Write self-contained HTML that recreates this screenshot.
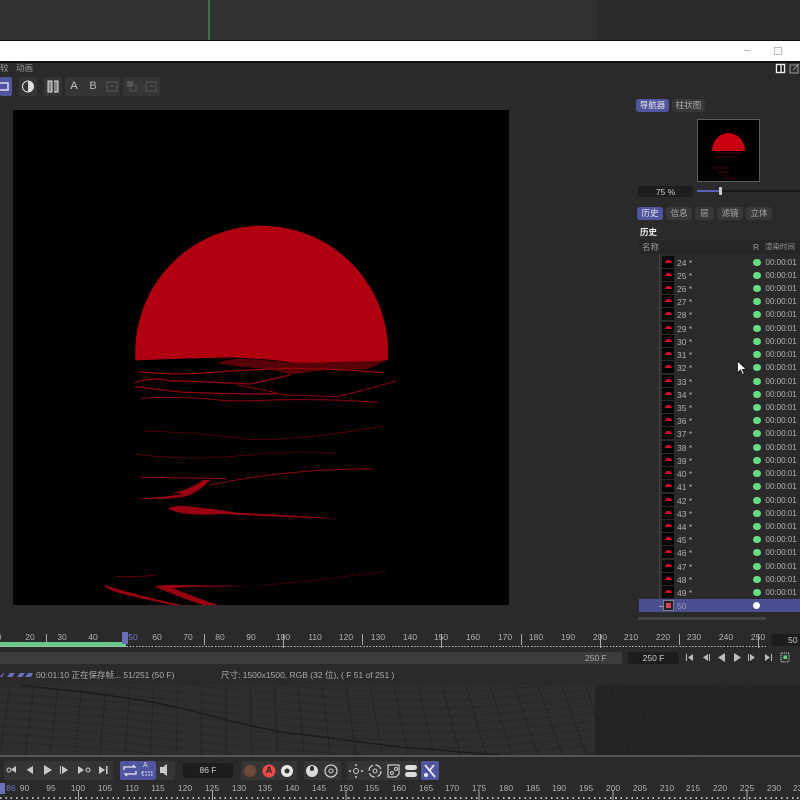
<!DOCTYPE html>
<html><head><meta charset="utf-8"><style>
html,body{margin:0;padding:0;background:#282828}
#p{position:relative;width:800px;height:800px;overflow:hidden;background:#2a2a2a;font:8.5px/12px "Liberation Sans","Noto Sans CJK SC",sans-serif;color:#b5b5b5;filter:blur(.3px)}
#p div,#p span,#p svg{position:absolute}
.b{background:#353535;border-radius:2px}
.tab{top:99px;height:13px;line-height:13px;text-align:center;background:#383838;border-radius:3px;color:#aaa}
.on{background:#50559f;color:#e8e8e8}
.t2{top:207px}
.l{top:631px;width:24px;margin-left:-12px;text-align:center;color:#b0b0b0}
.m{top:782px;width:24px;margin-left:-12px;text-align:center;color:#b0b0b0}
.r{left:639px;width:161px;height:13px}
.r i{position:absolute;left:23px;top:0;width:12px;height:12px;background:#060606}
.r i:after{content:"";position:absolute;left:2.5px;top:3.5px;width:7px;height:3.5px;border-radius:4px 4px 0 0;background:#d40a28}
.r b{position:absolute;left:38px;top:1px;font-weight:normal;color:#b0b0b0}
.r u{position:absolute;left:114px;top:2.5px;width:7.5px;height:7.5px;border-radius:50%;background:#68dc84}
.r s{position:absolute;left:126.5px;top:1px;text-decoration:none;color:#b0b0b0;font-size:8px}
</style></head><body><div id="p">
<div style="left:0;top:0;width:597px;height:40px;background:#323232"></div>
<div style="left:597px;top:0;width:203px;height:40px;background:#2a2a2a"></div>
<div style="left:208px;top:0;width:2px;height:40px;background:#3c6e48"></div>
<div style="left:0;top:40px;width:800px;height:1.5px;background:#111"></div>
<div style="left:0;top:41px;width:800px;height:20px;background:#fff"></div>
<div style="left:0;top:61px;width:800px;height:1.5px;background:#111"></div>
<div style="left:744px;top:50px;width:6px;height:1px;background:#bbb"></div>
<div style="left:774px;top:47px;width:6px;height:6px;border:1px solid #bbb"></div>

<span style="left:0;top:62px;color:#999">较</span><span style="left:16px;top:62px;color:#999">动画</span>
<div class="b" style="left:0;top:77px;width:12px;height:19px;background:#50559f"></div>
<div class="b" style="left:19px;top:77px;width:18px;height:19px"></div>
<div class="b" style="left:44px;top:77px;width:18px;height:19px"></div>
<div class="b" style="left:65px;top:77px;width:55px;height:19px"></div>
<div class="b" style="left:123px;top:77px;width:37px;height:19px"></div>
<span style="left:69px;top:80px;width:10px;text-align:center;font-size:11px;color:#c8c8c8">A</span>
<span style="left:88px;top:80px;width:10px;text-align:center;font-size:11px;color:#b8b8b8">B</span>
<svg style="left:0;top:62px" width="800" height="36" viewBox="0 62 800 36" fill="none">
<rect x="-1" y="83" width="9" height="7" stroke="#dde" stroke-width="1.5"/>
<circle cx="28" cy="86.5" r="5.5" stroke="#ddd"/><path d="M28 81a5.5 5.5 0 0 1 0 11z" fill="#ddd"/>
<path d="M48 81h4v11h-4zM54 81h4v11h-4" stroke="#ddd" fill="#ddd" fill-opacity=".5"/>
<path d="M107 82h10v9h-10zM110 86h4" stroke="#555"/>
<path d="M127 81h6v6h-6z" fill="#555"/><path d="M130 85h6v6h-6z" stroke="#555"/><path d="M146 82h10v9h-10zM150 86h4" stroke="#555"/>
<rect x="776.5" y="64.5" width="8" height="8" fill="#111" stroke="#eee" stroke-width="1.4"/><path d="M781 64v8" stroke="#eee" stroke-width="1.4"/>
<path d="M790 65h8v8h-8zM793 70l6-6" stroke="#999"/>
</svg>

<!-- viewer -->
<div style="left:13px;top:110px;width:496px;height:495px;background:#000"></div>
<svg style="left:0;top:0" width="800" height="610" viewBox="0 0 800 610">
<path d="M135.500 360.500A126.500 126.500 0 1 1 388 360Q360 364 297 363Q260 358 233 357.500Q190 358 135.500 360.500z" fill="#b0000f"/>
<g transform="translate(90 340) scale(.3333)" fill="none" stroke="#8e000c" stroke-width="4">
<path d="M380 70Q430 48 520 60Q620 72 720 66Q820 64 890 62L830 88Q720 84 600 104Q560 88 450 80Z" fill="#560007" stroke="none"/>
<path d="M145 95Q250 105 330 100Q450 90 600 85Q720 85 880 98"/>
<path d="M135 128Q180 110 240 122Q350 125 480 132Q540 120 600 105"/>
<path d="M135 140Q200 148 270 156Q400 162 560 162"/>
<path d="M440 135Q500 145 590 165Q680 168 740 170Q830 150 920 122" stroke-width="3"/>
<path d="M150 175Q260 168 370 178Q420 186 550 180Q700 176 865 187" stroke-width="3"/>
<path d="M160 273Q330 278 480 298Q620 303 880 258" stroke="#5e0008" stroke-width="2.500"/>
<path d="M135 343Q300 362 440 348Q600 330 740 340" stroke="#5e0008" stroke-width="2.500"/>
<path d="M150 412Q280 413 410 416" stroke-width="3"/>
<path d="M360 435Q600 385 850 387" stroke-width="3"/>
<path d="M340 420L360 420Q340 445 300 465Q260 480 135 476Q220 472 280 462L245 458Q285 456 340 420Z" fill="#980010" stroke="none"/>
<path d="M235 505Q260 492 320 502Q400 510 440 518Q600 525 750 537Q550 530 400 522Q270 530 235 505Z" fill="#980010" stroke="none"/>
<path d="M75 709Q140 712 200 705" stroke="#5e0008" stroke-width="3"/>
<path d="M195 740Q215 732 300 736L500 738L300 741Q260 742 250 745Q310 770 385 796L340 796Q250 765 195 740Z" fill="#980010" stroke="none"/>
<path d="M500 738Q700 720 890 693" stroke="#4a0006" stroke-width="2"/>
<path d="M38 735Q60 740 110 755Q200 780 280 796L250 796Q150 775 90 760Q55 750 38 735Z" fill="#980010" stroke="none"/>
</g></svg>

<!-- navigator -->
<div class="tab on" style="left:636px;width:33px">导航器</div>
<div class="tab" style="left:672px;width:33px">柱状图</div>
<div style="left:697px;top:119px;width:61px;height:61px;background:#000;border:1.5px solid #5a5a5a"></div>
<svg style="left:697px;top:119px" width="64" height="64" viewBox="697 119 64 64"><path d="M712 151a16.500 18 0 0 1 33 0z" fill="#c8000f"/><path d="M714 153h28M716 157h22M713 168h18M718 172h10M724 178h12" stroke="#3a0006" stroke-width="1.200"/></svg>
<div style="left:638px;top:186px;width:55px;height:11px;line-height:12px;background:#1e1e1e;text-align:center;color:#ccc">75 %</div>
<div style="left:697px;top:190px;width:103px;height:2px;background:#171717"></div>
<div style="left:697px;top:190px;width:23px;height:2px;background:#5a60b5"></div>
<div style="left:718.500px;top:187px;width:3px;height:8px;background:#ccc;border-radius:1px"></div>
<div class="tab on t2" style="left:637px;width:26px">历史</div>
<div class="tab t2" style="left:666px;width:26px">信息</div>
<div class="tab t2" style="left:695px;width:19px">层</div>
<div class="tab t2" style="left:717px;width:26px">滤镜</div>
<div class="tab t2" style="left:746px;width:26px">立体</div>
<span style="left:640px;top:226px;color:#f0f0f0;font-weight:bold">历史</span>
<div style="left:639px;top:240px;width:161px;height:14px;background:#262626"></div>
<span style="left:642px;top:241px;color:#999">名称</span><span style="left:753px;top:241px;color:#999">R</span><span style="left:765px;top:241px;color:#999;font-size:7.500px">渲染时间</span>
<div style="left:659px;top:254px;width:1px;height:353px;background:#444"></div>

<div class="r" style="top:256px"><i></i><b>24 *</b><u></u><s>00:00:01</s></div>
<div class="r" style="top:269px"><i></i><b>25 *</b><u></u><s>00:00:01</s></div>
<div class="r" style="top:282px"><i></i><b>26 *</b><u></u><s>00:00:01</s></div>
<div class="r" style="top:295px"><i></i><b>27 *</b><u></u><s>00:00:01</s></div>
<div class="r" style="top:308px"><i></i><b>28 *</b><u></u><s>00:00:01</s></div>
<div class="r" style="top:322px"><i></i><b>29 *</b><u></u><s>00:00:01</s></div>
<div class="r" style="top:335px"><i></i><b>30 *</b><u></u><s>00:00:01</s></div>
<div class="r" style="top:348px"><i></i><b>31 *</b><u></u><s>00:00:01</s></div>
<div class="r" style="top:361px"><i></i><b>32 *</b><u></u><s>00:00:01</s></div>
<div class="r" style="top:375px"><i></i><b>33 *</b><u></u><s>00:00:01</s></div>
<div class="r" style="top:388px"><i></i><b>34 *</b><u></u><s>00:00:01</s></div>
<div class="r" style="top:401px"><i></i><b>35 *</b><u></u><s>00:00:01</s></div>
<div class="r" style="top:414px"><i></i><b>36 *</b><u></u><s>00:00:01</s></div>
<div class="r" style="top:427px"><i></i><b>37 *</b><u></u><s>00:00:01</s></div>
<div class="r" style="top:441px"><i></i><b>38 *</b><u></u><s>00:00:01</s></div>
<div class="r" style="top:454px"><i></i><b>39 *</b><u></u><s>00:00:01</s></div>
<div class="r" style="top:467px"><i></i><b>40 *</b><u></u><s>00:00:01</s></div>
<div class="r" style="top:480px"><i></i><b>41 *</b><u></u><s>00:00:01</s></div>
<div class="r" style="top:494px"><i></i><b>42 *</b><u></u><s>00:00:01</s></div>
<div class="r" style="top:507px"><i></i><b>43 *</b><u></u><s>00:00:01</s></div>
<div class="r" style="top:520px"><i></i><b>44 *</b><u></u><s>00:00:01</s></div>
<div class="r" style="top:533px"><i></i><b>45 *</b><u></u><s>00:00:01</s></div>
<div class="r" style="top:546px"><i></i><b>46 *</b><u></u><s>00:00:01</s></div>
<div class="r" style="top:560px"><i></i><b>47 *</b><u></u><s>00:00:01</s></div>
<div class="r" style="top:573px"><i></i><b>48 *</b><u></u><s>00:00:01</s></div>
<div class="r" style="top:586px"><i></i><b>49 *</b><u></u><s>00:00:01</s></div>
<div class="r" style="top:599px;height:13px;background:#4a4f90"></div>
<div style="left:659px;top:606px;width:6px;height:1px;background:#999"></div>
<svg style="left:663px;top:600px" width="11" height="11"><rect x=".5" y=".5" width="10" height="10" fill="#222" stroke="#bbb" stroke-dasharray="1 1"/><rect x="3" y="3" width="5" height="5" fill="#e04060"/></svg>
<span style="left:677px;top:600px;color:#9a9ab8">50</span>
<div style="left:753px;top:602px;width:7px;height:7px;border-radius:50%;background:#fff"></div>
<div style="left:638px;top:617px;width:128px;height:3px;background:#444;border-radius:1px"></div>
<svg style="left:736px;top:360px" width="11" height="16" viewBox="0 0 11 16"><path d="M1.500 1v12l3-3 2 4.500 1.800-.8-2-4.300h4z" fill="#fff" stroke="#111" stroke-width=".8"/></svg>

<!-- timeline -->
<div style="left:0;top:642px;width:126px;height:4.500px;background:#67c98a"></div>
<div style="left:0;top:646px;width:766px;height:1px;background:repeating-linear-gradient(90deg,#bbb 0 1.500px,transparent 1.500px 3.160px)"></div>
<svg style="left:0;top:628px" width="800" height="22" viewBox="0 628 800 22" stroke="#aaa" fill="none">
<path d="M46.500 634v11M204.500 634v11M362.500 634v11M521.500 634v11M679.500 634v11"/>
<path d="M283.500 634v14M441.500 634v14M600.500 634v14M758.500 634v14"/>
</svg>
<span class="l" style="left:-1px">0</span><span class="l" style="left:30px">20</span><span class="l" style="left:62px">30</span><span class="l" style="left:93px">40</span><span class="l" style="left:133px;color:#6f74c8">50</span><span class="l" style="left:157px">60</span><span class="l" style="left:188px">70</span><span class="l" style="left:220px">80</span><span class="l" style="left:251px">90</span><span class="l" style="left:283px">100</span><span class="l" style="left:315px">110</span><span class="l" style="left:346px">120</span><span class="l" style="left:378px">130</span><span class="l" style="left:410px">140</span><span class="l" style="left:441px">150</span><span class="l" style="left:473px">160</span><span class="l" style="left:505px">170</span><span class="l" style="left:536px">180</span><span class="l" style="left:568px">190</span><span class="l" style="left:600px">200</span><span class="l" style="left:631px">210</span><span class="l" style="left:663px">220</span><span class="l" style="left:694px">230</span><span class="l" style="left:726px">240</span><span class="l" style="left:758px">250</span>
<div style="left:122px;top:632px;width:6px;height:12px;background:#6a6fb8"></div>
<div style="left:771px;top:634px;width:29px;height:12px;background:#1e1e1e;text-align:right;color:#ccc">50&nbsp;</div>
<div style="left:0;top:652px;width:622px;height:12px;background:#3c3c3c"></div>
<span style="left:585px;top:652px;color:#aaa">250 F</span>
<div style="left:628px;top:652px;width:51px;height:12px;background:#1d1d1d;text-align:center;color:#ccc">250 F</div>
<svg style="left:680px;top:650px" width="120" height="16" viewBox="680 650 120 16" fill="#bbb">
<path d="M686 654v7h1v-7zM693 654v7l-5-3.500zM708 654v7l-5-3.500zM709 654h1v7h-1zM725 653v9l-7-4.500zM734 653v9l7-4.500zM750 654v7l5-3.500zM748 654h1v7h-1zM765 654v7l5-3.500zM771 654h1v7h-1z"/>
<rect x="781" y="653" width="8" height="9" rx="1" fill="#333" stroke="#ccc" stroke-dasharray="1.200 .8"/><rect x="783.500" y="655.500" width="3.500" height="3.500" fill="#5fd07a"/>
</svg>
<svg style="left:0;top:672px" width="34" height="6" viewBox="0 0 34 6" fill="#6a70c0"><path d="M0 5l3-4h1l-2 4zM7 5l3-4h5l-3 4zM17 5l3-4h5l-3 4zM25 5l3-4h5l-2 4z"/></svg>
<span style="left:36px;top:669px;color:#aaa">00:01:10 正在保存帧... 51/251 (50 F)</span>
<span style="left:221px;top:669px;color:#aaa">尺寸: 1500x1500, RGB (32 位), ( F 51 of 251 )</span>

<!-- mesh -->
<svg style="left:0;top:685px" width="800" height="71" viewBox="0 685 800 71" fill="none">
<rect x="0" y="685" width="595" height="71" fill="#2e2e2e"/>
<rect x="595" y="685" width="205" height="71" fill="#242424"/>
<g stroke="#272727" stroke-width=".8">
<path id="h" d="M-5 686C120 690 250 712 400 716C520 720 650 692 805 694"/>
<use href="#h" y="-24"/><use href="#h" y="-16"/><use href="#h" y="-8"/><use href="#h" y="8"/><use href="#h" y="16"/><use href="#h" y="24"/><use href="#h" y="32"/><use href="#h" y="40"/><use href="#h" y="48"/><use href="#h" y="56"/>
<path d="M10 685L0 755M34 685L25 755M58 685L50 755M82 685L75 755M106 685L100 755M130 685L125 755M154 685L150 755M178 685L176 755M202 685L201 755M226 685V755M250 685L252 755M274 685L278 755M298 685L304 755M322 685L330 755M346 685L356 755M370 685L382 755M394 685L408 755M418 685L434 755M442 685L460 755M466 685L486 755M490 685L512 755M514 685L538 755M538 685L562 755M562 685L586 755M586 685L608 755M610 685L630 755M634 685L656 755M658 685L682 755M682 685L708 755M706 685L734 755M730 685L760 755M754 685L786 755M778 685L812 755" stroke="#202020"/>
</g>
<path d="M20 685C60 690 120 695 167 705C210 715 240 725 283 732C330 738 360 742 400 747C440 750 470 753 500 755" stroke="#1b1b1b" stroke-width="1.300"/>
</svg>
<div style="left:0;top:755px;width:800px;height:2px;background:#555"></div>

<!-- bottom toolbar -->
<div class="b" style="left:4px;top:761px;width:109px;height:19px"></div>
<div class="b" style="left:120px;top:761px;width:36px;height:19px;background:#50559f"></div>
<div class="b" style="left:156px;top:761px;width:19px;height:19px"></div>
<div style="left:183px;top:763px;width:50px;height:15px;line-height:15px;background:#1d1d1d;text-align:center;color:#ccc">86 F</div>
<div class="b" style="left:241px;top:761px;width:56px;height:19px"></div>
<div class="b" style="left:304px;top:761px;width:37px;height:19px"></div>
<div class="b" style="left:347px;top:761px;width:72px;height:19px"></div>
<div class="b" style="left:421px;top:761px;width:18px;height:19px;background:#50559f"></div>
<span style="left:143px;top:760px;font-size:7px;color:#ddd">A</span>
<span style="left:265px;top:764px;width:8px;text-align:center;font-weight:bold;color:#222;font-size:9px;z-index:2">A</span>
<svg style="left:0;top:757px" width="800" height="26" viewBox="0 757 800 26" fill="none" stroke="#ccc">
<g fill="#c8c8c8" stroke="none">
<path d="M16 766v7l-5-3.500zM33 766v8l-6-4v-.5zM44 765v10l8-5zM62 766v8l6-4zM60 766h1v8h-1zM78 766v8l6-4zM99 766v8l6-4zM106 766h1.500v8h-1.500z"/>
<path d="M160 767h3l4-3v12l-4-3h-3z"/>
</g>
<circle cx="9" cy="770" r="2"/><circle cx="88" cy="770" r="2"/>
<path d="M124 770v-3h11l-2-2M136 771v3h-11l2 2" stroke="#e8e8f0" stroke-width="1.300"/>
<path d="M142 772h10v3h-10z" stroke="#e0e0f0" stroke-dasharray="2 1"/>
<circle cx="250" cy="771" r="6" fill="#6b4a3a" stroke="#5a4035"/>
<circle cx="269" cy="771" r="6.500" fill="#e84a4a" stroke="none"/>
<circle cx="287" cy="771" r="6" fill="#e8e8e8" stroke="none"/><circle cx="287" cy="771" r="2.500" fill="#333" stroke="none"/>
<circle cx="312" cy="771" r="6" fill="#ddd" stroke="none"/><rect x="310" y="766" width="4" height="5" rx="2" fill="#333" stroke="none"/>
<circle cx="331" cy="771" r="6" stroke-width="1.300"/><circle cx="331" cy="771" r="2" stroke-width="1.100"/>
<circle cx="356" cy="771" r="2.500"/><path d="M356 764v2M356 776v2M349 771h2M361 771h2" stroke-width="1.500"/>
<circle cx="375" cy="771" r="6" stroke-width="1.300" stroke-dasharray="7 2.500"/><circle cx="375" cy="771" r="2"/>
<path d="M388 765h11v9l-3 3h-8z" stroke-width="1.200"/><circle cx="392" cy="773" r="1.500"/><circle cx="396" cy="769" r="1.500"/>
<rect x="405" y="765" width="12" height="5" rx="2.500" fill="#ddd" stroke="none"/><rect x="405" y="772" width="12" height="5" rx="2.500" fill="#ddd" stroke="none"/>
<path d="M425 765l10 12M434 765l-4 5" stroke="#e8e8f0" stroke-width="1.800"/><circle cx="426" cy="775" r="2" fill="#e8e8f0" stroke="none"/>
</svg>
<span class="m" style="left:11px;color:#6f74c8">86</span><span class="m" style="left:24.500px">90</span><span class="m" style="left:51px">95</span><span class="m" style="left:78px">100</span><span class="m" style="left:105px">105</span><span class="m" style="left:132px">110</span><span class="m" style="left:158px">115</span><span class="m" style="left:185px">120</span><span class="m" style="left:212px">125</span><span class="m" style="left:239px">130</span><span class="m" style="left:265px">135</span><span class="m" style="left:292px">140</span><span class="m" style="left:319px">145</span><span class="m" style="left:346px">150</span><span class="m" style="left:372px">155</span><span class="m" style="left:399px">160</span><span class="m" style="left:426px">165</span><span class="m" style="left:452px">170</span><span class="m" style="left:479px">175</span><span class="m" style="left:506px">180</span><span class="m" style="left:533px">185</span><span class="m" style="left:559px">190</span><span class="m" style="left:586px">195</span><span class="m" style="left:613px">200</span><span class="m" style="left:640px">205</span><span class="m" style="left:667px">210</span><span class="m" style="left:693px">215</span><span class="m" style="left:720px">220</span><span class="m" style="left:747px">225</span><span class="m" style="left:774px">230</span><span class="m" style="left:800px">235</span>
<div style="left:0;top:783px;width:5px;height:11px;background:#6a6fb8"></div>
<div style="left:0;top:797px;width:800px;height:1.500px;background:repeating-linear-gradient(90deg,#bbb 0 1.500px,transparent 1.500px 5.350px)"></div>
<svg style="left:0;top:790px" width="800" height="10" viewBox="0 790 800 10" stroke="#aaa"><path d="M78.500 790v10M212.500 790v10M346 790v10M479 790v10M613 790v10M747 790v10"/></svg>
</div></body></html>
